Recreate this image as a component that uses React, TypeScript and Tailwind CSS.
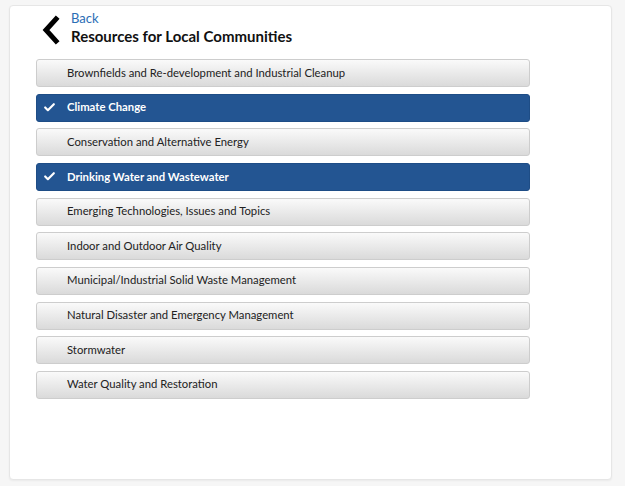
import { Check } from "lucide-react";

const topics = [
  { label: "Brownfields and Re-development and Industrial Cleanup", selected: false },
  { label: "Climate Change", selected: true },
  { label: "Conservation and Alternative Energy", selected: false },
  { label: "Drinking Water and Wastewater", selected: true },
  { label: "Emerging Technologies, Issues and Topics", selected: false },
  { label: "Indoor and Outdoor Air Quality", selected: false },
  { label: "Municipal/Industrial Solid Waste Management", selected: false },
  { label: "Natural Disaster and Emergency Management", selected: false },
  { label: "Stormwater", selected: false },
  { label: "Water Quality and Restoration", selected: false },
];

export default function App() {
  return (
    <div className="w-[625px] h-[486px] bg-[#f6f6f6] pt-[5px] pl-[9px] font-['Lato',sans-serif]">
      <div className="w-[603px] h-[475px] bg-white border border-[#e6e6e6] rounded-[4px] shadow-[0_1px_2px_rgba(0,0,0,0.05)] pl-[26px]">
        {/* Header */}
        <div className="flex items-start pt-[5px]">
          <svg width="22" height="30" viewBox="0 0 22 30" className="mt-[4px] ml-[4px]">
            <path d="M16 4 L6 15 L16 26" fill="none" stroke="#000" strokeWidth="5" strokeLinecap="square" />
          </svg>
          <div className="ml-[9px] flex flex-col">
            <a className="text-[13px] leading-[15px] text-[#2a6db5]">Back</a>
            <h1 className="text-[15px] leading-[20px] font-bold text-[#111]">
              Resources for Local Communities
            </h1>
          </div>
        </div>

        {/* Topic list */}
        <div className="mt-[13px] w-[494px] flex flex-col gap-[6.67px]">
          {topics.map((t) =>
            t.selected ? (
              <div
                key={t.label}
                className="h-[28px] flex items-center rounded-[3px] border border-[#1e4d86] bg-[#235592] text-white text-[11.3px] font-bold"
              >
                <Check className="w-[13px] h-[13px] ml-[6px]" strokeWidth={4} />
                <span className="ml-[11px]">{t.label}</span>
              </div>
            ) : (
              <div
                key={t.label}
                className="h-[28px] flex items-center rounded-[3px] border border-[#cdcdcd] bg-gradient-to-b from-[#fafafa] to-[#dadada] text-[#222] text-[11.3px]"
              >
                <span className="ml-[30px]">{t.label}</span>
              </div>
            )
          )}
        </div>
      </div>
    </div>
  );
}
